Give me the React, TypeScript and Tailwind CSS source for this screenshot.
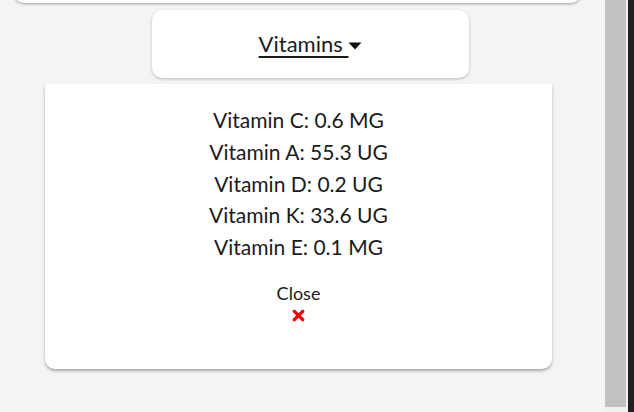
const vitamins = [
  { name: 'Vitamin C', amount: '0.6 MG' },
  { name: 'Vitamin A', amount: '55.3 UG' },
  { name: 'Vitamin D', amount: '0.2 UG' },
  { name: 'Vitamin K', amount: '33.6 UG' },
  { name: 'Vitamin E', amount: '0.1 MG' },
]

export default function App() {
  return (
    <div className="flex h-[412px] w-[634px] overflow-hidden font-['Lato',sans-serif] text-[#1b1b1b]">
      <div className="flex w-[605px] flex-col bg-[#f4f4f4]">
        {/* card above, scrolled out of view */}
        <div className="-mt-[40px] ml-[14px] h-[43px] w-[567px] rounded-[10px] bg-white shadow-[0_1px_3px_rgba(0,0,0,0.35)]" />

        <div className="ml-[152px] mt-[7px] flex h-[68px] w-[317px] items-center justify-center rounded-[10px] bg-white shadow-[0_1px_3px_rgba(0,0,0,0.25)]">
          <button className="flex items-center text-[22px] leading-none">
            <span className="underline decoration-2 underline-offset-[4px]">Vitamins&nbsp;</span>
            <svg viewBox="0 0 14 8" className="mt-[3px] h-[8px] w-[14px]">
              <path d="M0.5 0.5 H13.5 L7 7.5 Z" fill="#111" />
            </svg>
          </button>
        </div>

        <div className="ml-[45px] mt-[6px] flex h-[285px] w-[507px] flex-col items-center rounded-t-[2px] rounded-b-[10px] bg-white pt-[20px] shadow-[0_2px_3px_rgba(0,0,0,0.3)]">
          {vitamins.map((v) => (
            <p key={v.name} className="text-[21px] leading-[31.75px]">
              {v.name}: {v.amount}
            </p>
          ))}
          <button className="mt-[18px] flex flex-col items-center">
            <span className="text-[18px] leading-[24px]">Close</span>
            <svg viewBox="0 0 14 14" className="mt-[4px] h-[13px] w-[13px]">
              <path d="M2.5 2.5 L11.5 11.5 M11.5 2.5 L2.5 11.5" stroke="#f00000" strokeWidth="3.6" strokeLinecap="round" />
            </svg>
          </button>
        </div>
      </div>

      {/* scrollbar */}
      <div className="flex w-[23px] flex-col bg-[#f1f1f1]">
        <div className="h-[407px] w-[21px] bg-[#c1c1c1]" />
      </div>
      <div className="w-[6px] bg-[#202124]" />
    </div>
  )
}
